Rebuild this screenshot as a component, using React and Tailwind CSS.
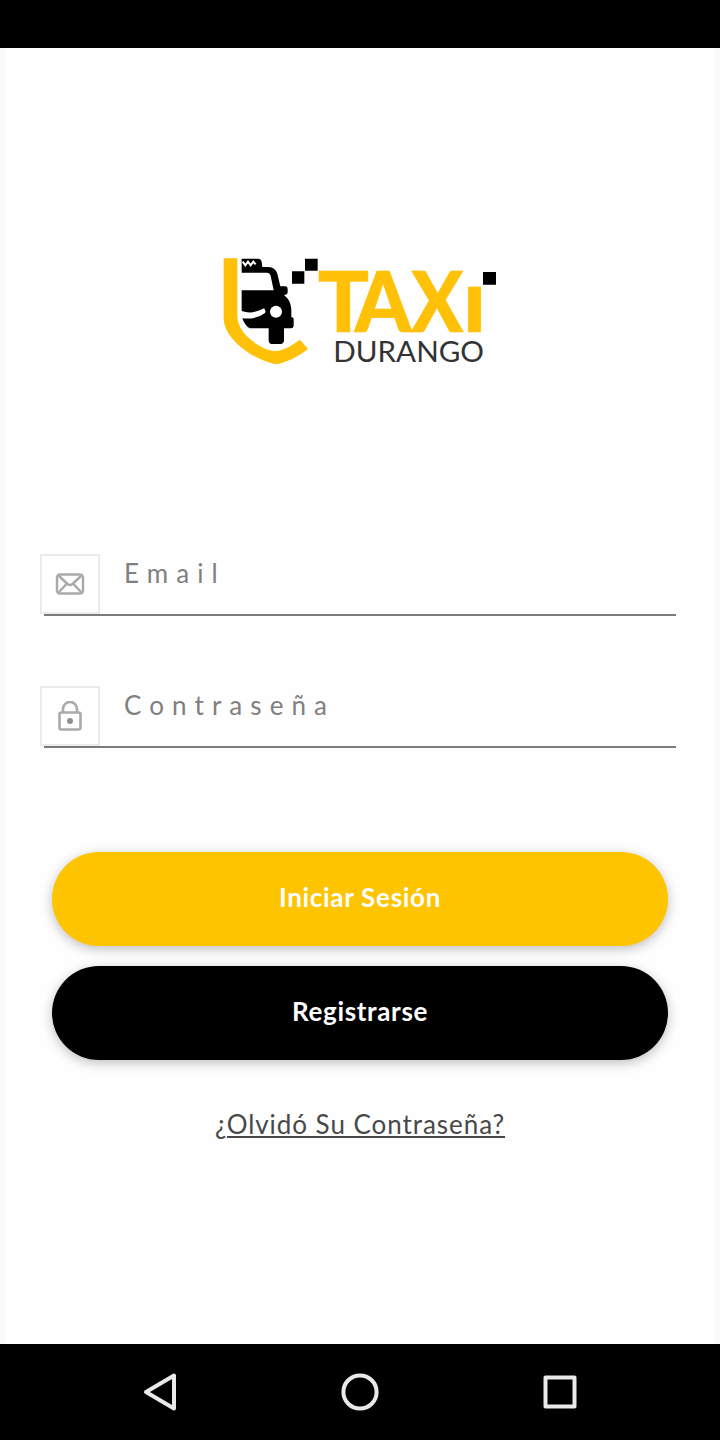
function Logo() {
  return (
    <svg className="block h-[130px] w-[300px]" viewBox="0 0 900 390" role="img" aria-label="Taxi Durango">
      <path fill="#ffc107" d="M41 40H82V215C84 249 108 274 134 293C157 309 178 318 198 318C222 316 246 301 270 284L294 312C265 334 232 352 198 358C161 350 119 330 89 303C61 278 43 254 41 222Z" />
      <path fill="#000" d="M95 41H146Q154 42 155 50L157 66H175C190 67 198 74 202 86L211 124H227Q233 125 233 132V142Q233 149 226 149L222 150C238 163 243 177 244 195V217H247Q251 218 251 223V243Q250 250 243 250H222V287Q221 296 212 297H185Q177 296 176 287V250H119C108 244 101 233 97 220C124 223 148 217 165 204C168 200 166 195 162 190C139 202 117 206 95 198V136H191L182 93Q180 83 170 83H95Z" />
      <circle cx="198" cy="200" r="18" fill="#fff" />
      <path d="M98 50l8 11 8-11 8 11 8-11 7 8" fill="none" stroke="#fff" strokeWidth="6" />
      <path fill="#000" d="M285 41h38v36h-38zM246 79h37v37h-37zM819 81h39v38h-39z" />
      <g fill="#ffc107" stroke="#ffc107" strokeWidth="2" fontFamily="Lato, sans-serif" fontWeight="900">
        <text x="323" y="261" fontSize="250" textLength="154" lengthAdjust="spacingAndGlyphs">T</text>
        <text x="434" y="261" fontSize="250" textLength="170" lengthAdjust="spacingAndGlyphs">A</text>
        <text x="604" y="261" fontSize="250" textLength="156" lengthAdjust="spacingAndGlyphs">X</text>
        <text x="759" y="261" fontSize="265">ı</text>
      </g>
      <text x="370" y="351" fontSize="88" textLength="452" lengthAdjust="spacingAndGlyphs" fill="#333" fontFamily="Lato, sans-serif">DURANGO</text>
    </svg>
  );
}

function MailIcon() {
  return (
    <svg className="size-[30px]" viewBox="0 0 30 30" fill="none" stroke="#aaa" strokeWidth="2.500">
      <rect x="2" y="5.500" width="26" height="19" rx="3" />
      <path d="M4 7l8.500 8q2.500 2 5 0L26 7M4 23l7.500-8M26 23l-7.500-8" />
    </svg>
  );
}

function LockIcon() {
  return (
    <svg className="size-[30px]" viewBox="0 0 30 30" fill="none" stroke="#aaa" strokeWidth="2.600">
      <rect x="4.500" y="11.500" width="21" height="17" rx="2" />
      <path d="M8 12V8a7 7 0 0 1 14 0v4" />
      <circle cx="15" cy="20" r="3" fill="#909090" stroke="none" />
    </svg>
  );
}

function Field({ icon, label }) {
  return (
    <div className="flex h-[62px] items-start">
      <div className="flex size-[60px] shrink-0 items-center justify-center border-2 border-[#ebebeb] bg-white">{icon}</div>
      <div className="-ml-14 flex h-[62px] grow items-start border-b-2 border-[#7b7b7b] pl-20">
        <span className="text-[26px] leading-[38px] tracking-[8.100px] text-[#808080]">{label}</span>
      </div>
    </div>
  );
}

export default function App() {
  return (
    <div className="flex h-[1440px] w-[720px] flex-col overflow-hidden bg-black font-[Lato,sans-serif]">
      <header className="h-12 shrink-0 bg-black" />
      <main className="flex h-[1296px] flex-col border-x-[5px] border-[#fafafa] bg-[#fefefe] pt-[197px]">
        <div className="flex pl-[205px]"><Logo /></div>
        <div className="mt-[179px] flex flex-col gap-[70px] pr-[39px] pl-[35px]">
          <Field icon={<MailIcon />} label="Email" />
          <Field icon={<LockIcon />} label="Contraseña" />
        </div>
        <div className="mt-[104px] flex flex-col gap-5 px-[47px]">
          <button className="h-[94px] rounded-full bg-[#fec400] pb-1 text-[26px] font-bold tracking-[0.700px] text-white shadow-[0_3px_12px_rgba(0,0,0,0.26)]">Iniciar Sesión</button>
          <button className="h-[94px] rounded-full bg-black pb-1 text-[26px] font-bold tracking-[0.650px] text-white shadow-[0_3px_12px_rgba(0,0,0,0.26)]">Registrarse</button>
        </div>
        <a className="mt-[46px] self-center text-[26px] leading-9 tracking-[0.950px] text-[#484848] underline decoration-2 underline-offset-2">¿Olvidó Su Contraseña?</a>
      </main>
      <nav className="flex h-24 shrink-0 items-center justify-between px-[140px]">
        <svg className="size-10" viewBox="0 0 40 40" fill="none" stroke="#e9e9e9" strokeWidth="4" strokeLinejoin="round"><path d="M34 3.500V36.500L6 20Z" /></svg>
        <svg className="size-10" viewBox="0 0 40 40" fill="none" stroke="#e9e9e9" strokeWidth="4"><circle cx="20" cy="20" r="16.600" /></svg>
        <svg className="size-10" viewBox="0 0 40 40" fill="none" stroke="#e9e9e9" strokeWidth="4" strokeLinejoin="round"><rect x="5.500" y="5.500" width="29" height="29" /></svg>
      </nav>
    </div>
  );
}
